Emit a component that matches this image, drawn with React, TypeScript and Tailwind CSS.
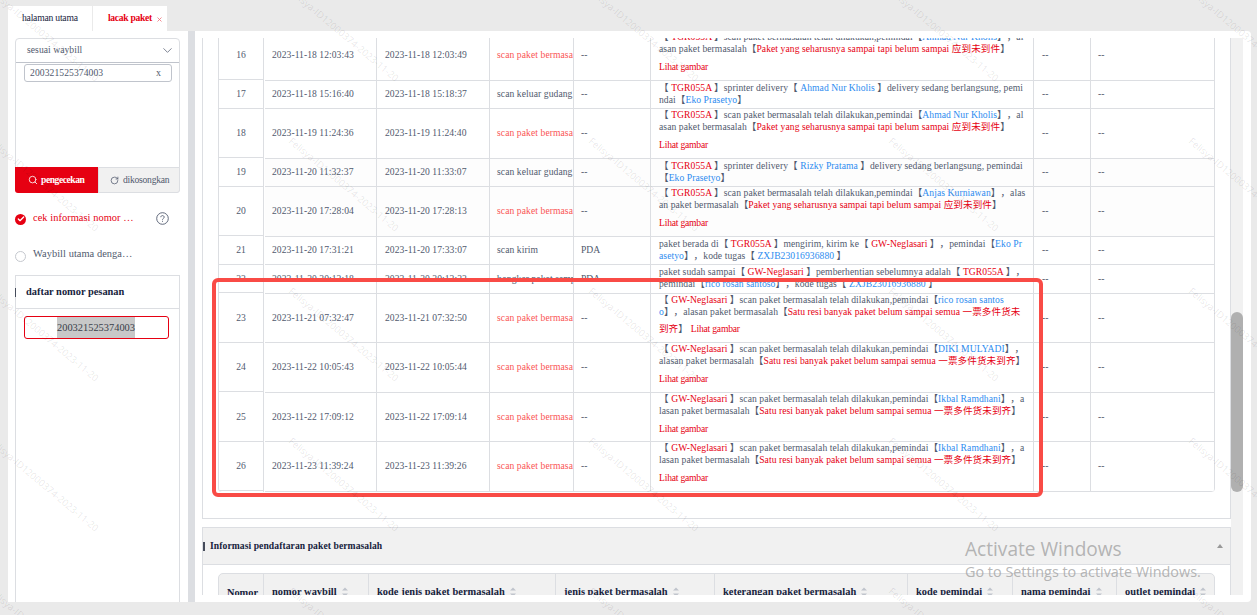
import type { ReactNode } from 'react'
import { ChevronDown, Search, RotateCw, Check } from 'lucide-react'

interface ScanRow {
    no: number
    scanned: string
    uploaded: string
    type: string
    problem?: boolean
    source: string
    // fixed column cells sit one pixel higher on some rows
    fixedHeight: string
    height: string
    shade?: boolean
    detail: ReactNode
}

const R = ({ children }: { children: ReactNode }) => <span className="text-[#e60012]">{children}</span>
const B = ({ children }: { children: ReactNode }) => <span className="text-[#2d8cf0]">{children}</span>
const Line = ({ children }: { children: ReactNode }) => <div className="h-3 leading-3 tracking-[0.07px] whitespace-pre">{children}</div>
const Photo = () => <div className="mt-1.5 h-3 leading-3 tracking-[-0.2px] text-[#e60012]">Lihat gambar</div>

const LATE = 'Paket yang seharusnya sampai tapi belum sampai 应到未到件'
const PARTIAL = 'Satu resi banyak paket belum sampai semua 一票多件货未到齐'
const PROBLEM = 'scan paket bermasalah'

const ROWS: ScanRow[] = [
    {
        no: 16, scanned: '2023-11-18 12:03:43', uploaded: '2023-11-18 12:03:49', type: PROBLEM, problem: true, source: '--',
        height: 'h-[50px]', fixedHeight: 'h-[49px]',
        detail: (
            <>
                <Line>【 <R>TGR055A</R> 】scan paket bermasalah telah dilakukan,pemindai【<B>Ahmad Nur Kholis</B>】，al</Line>
                <Line>asan paket bermasalah【<R>{LATE}</R>】</Line>
                <Photo />
            </>
        ),
    },
    {
        no: 17, scanned: '2023-11-18 15:16:40', uploaded: '2023-11-18 15:18:37', type: 'scan keluar gudang', source: '--',
        height: 'h-[28px]', fixedHeight: 'h-[29px]',
        detail: (
            <>
                <Line>【 <R>TGR055A</R> 】sprinter delivery【 <B>Ahmad Nur Kholis</B> 】delivery sedang berlangsung, pemi</Line>
                <Line>ndai【<B>Eko Prasetyo</B>】</Line>
            </>
        ),
    },
    {
        no: 18, scanned: '2023-11-19 11:24:36', uploaded: '2023-11-19 11:24:40', type: PROBLEM, problem: true, source: '--',
        height: 'h-[50px]', fixedHeight: 'h-[49px]',
        detail: (
            <>
                <Line>【 <R>TGR055A</R> 】scan paket bermasalah telah dilakukan,pemindai【<B>Ahmad Nur Kholis</B>】，al</Line>
                <Line>asan paket bermasalah【<R>{LATE}</R>】</Line>
                <Photo />
            </>
        ),
    },
    {
        no: 19, scanned: '2023-11-20 11:32:37', uploaded: '2023-11-20 11:33:07', type: 'scan keluar gudang', source: '--',
        height: 'h-[28px]', fixedHeight: 'h-[29px]', shade: true,
        detail: (
            <>
                <Line>【 <R>TGR055A</R> 】sprinter delivery【 <B>Rizky Pratama</B> 】delivery sedang berlangsung, pemindai</Line>
                <Line>【<B>Eko Prasetyo</B>】</Line>
            </>
        ),
    },
    {
        no: 20, scanned: '2023-11-20 17:28:04', uploaded: '2023-11-20 17:28:13', type: PROBLEM, problem: true, source: '--',
        height: 'h-[50px]', fixedHeight: 'h-[49px]', shade: true,
        detail: (
            <>
                <Line>【 <R>TGR055A</R> 】scan paket bermasalah telah dilakukan,pemindai【<B>Anjas Kurniawan</B>】，alas</Line>
                <Line>an paket bermasalah【<R>{LATE}</R>】</Line>
                <Photo />
            </>
        ),
    },
    {
        no: 21, scanned: '2023-11-20 17:31:21', uploaded: '2023-11-20 17:33:07', type: 'scan kirim', source: 'PDA',
        height: 'h-[28px]', fixedHeight: 'h-[29px]',
        detail: (
            <>
                <Line>paket berada di【 <R>TGR055A</R> 】mengirim, kirim ke【 <R>GW-Neglasari</R> 】，pemindai【<B>Eko Pr</B></Line>
                <Line><B>asetyo</B>】，kode tugas【 <B>ZXJB23016936880</B> 】</Line>
            </>
        ),
    },
    {
        no: 22, scanned: '2023-11-20 20:12:18', uploaded: '2023-11-20 20:12:22', type: 'bongkar paket sampai', source: 'PDA',
        height: 'h-[29px]', fixedHeight: 'h-[28px]',
        detail: (
            <>
                <Line>paket sudah sampai【 <R>GW-Neglasari</R> 】pemberhentian sebelumnya adalah【 <R>TGR055A</R> 】，</Line>
                <Line>pemindai【<B>rico rosan santoso</B>】，kode tugas【 <B>ZXJB23016936880</B> 】</Line>
            </>
        ),
    },
    {
        no: 23, scanned: '2023-11-21 07:32:47', uploaded: '2023-11-21 07:32:50', type: PROBLEM, problem: true, source: '--',
        height: 'h-[49px]', fixedHeight: 'h-[50px]',
        detail: (
            <>
                <Line>【 <R>GW-Neglasari</R> 】scan paket bermasalah telah dilakukan,pemindai【<B>rico rosan santos</B></Line>
                <Line><B>o</B>】，alasan paket bermasalah【<R>Satu resi banyak paket belum sampai semua 一票多件货未</R></Line>
                <div className="mt-[5px] h-3 leading-3 whitespace-pre"><R>到齐</R>】<span className="ml-[3px] tracking-[-0.2px] text-[#e60012]">Lihat gambar</span></div>
            </>
        ),
    },
    {
        no: 24, scanned: '2023-11-22 10:05:43', uploaded: '2023-11-22 10:05:44', type: PROBLEM, problem: true, source: '--',
        height: 'h-[50px]', fixedHeight: 'h-[49px]',
        detail: (
            <>
                <Line>【 <R>GW-Neglasari</R> 】scan paket bermasalah telah dilakukan,pemindai【<B>DIKI MULYADI</B>】，</Line>
                <Line>alasan paket bermasalah【<R>{PARTIAL}</R>】</Line>
                <Photo />
            </>
        ),
    },
    {
        no: 25, scanned: '2023-11-22 17:09:12', uploaded: '2023-11-22 17:09:14', type: PROBLEM, problem: true, source: '--',
        height: 'h-[49px]', fixedHeight: 'h-[50px]',
        detail: (
            <>
                <Line>【 <R>GW-Neglasari</R> 】scan paket bermasalah telah dilakukan,pemindai【<B>Ikbal Ramdhani</B>】，a</Line>
                <Line>lasan paket bermasalah【<R>{PARTIAL}</R>】</Line>
                <Photo />
            </>
        ),
    },
    {
        no: 26, scanned: '2023-11-23 11:39:24', uploaded: '2023-11-23 11:39:26', type: PROBLEM, problem: true, source: '--',
        height: 'h-[50px]', fixedHeight: 'h-[49px]',
        detail: (
            <>
                <Line>【 <R>GW-Neglasari</R> 】scan paket bermasalah telah dilakukan,pemindai【<B>Ikbal Ramdhani</B>】，a</Line>
                <Line>lasan paket bermasalah【<R>{PARTIAL}</R>】</Line>
                <Photo />
            </>
        ),
    },
]

const HEADERS = [
    { label: 'nomor waybill', width: 'w-[105px]' },
    { label: 'kode jenis paket bermasalah', width: 'w-[187px]' },
    { label: 'jenis paket bermasalah', width: 'w-[159px]' },
    { label: 'keterangan paket bermasalah', width: 'w-[193px]' },
    { label: 'kode pemindai', width: 'w-[105px]' },
    { label: 'nama pemindai', width: 'w-[104px]' },
    { label: 'outlet pemindai', width: 'w-[97px]' },
]

function SortIcon() {
    return (
        <svg width="6" height="10" viewBox="0 0 6 10" className="fill-[#c0c4cc]">
            <path d="M3 0.5 6 3.5H0zM0 6.5h6L3 9.5z" />
        </svg>
    )
}

function Tabs() {
    return (
        <div className="ml-2 flex h-[25px] w-[159px] bg-white text-[9.6px]">
            <div className="flex w-[85px] items-center border-r border-[#eaeaea] pl-[14px] tracking-[-0.2px] text-[#17233d]">
                halaman utama
            </div>
            <div className="flex flex-1 items-center pl-[15px] font-bold text-[#e60012]">
                <span className="w-[49px] tracking-[-0.3px]">lacak paket</span>
                <svg width="5" height="5" viewBox="0 0 5 5" className="mt-0.5 stroke-[#ee7078]" strokeWidth="0.8">
                    <path d="M.5.5l4 4M4.5.5l-4 4" />
                </svg>
            </div>
        </div>
    )
}

function Sidebar() {
    return (
        <aside className="flex w-[180px] flex-col bg-white pt-[7px] pl-[7px]">
            <div className="h-[155px] w-[165px] rounded border border-[#dcdee2]">
                <div className="flex h-6 items-center justify-between border-b border-[#c0c4cc] pr-[4px] pl-[11px] text-[9.6px] text-[#515a6e]">
                    <span className="tracking-[0.05px]">sesuai waybill</span>
                    <ChevronDown size={15} strokeWidth={1.6} className="text-[#808695]" />
                </div>
                <div className="mt-px ml-2 flex h-[18px] w-[148px] items-center justify-between rounded-[3px] border border-[#c0c4cc] pr-[10px] pl-[5px] text-[9.6px] text-[#515a6e]">
                    <span className="tracking-[0.08px]">200321525374003</span>
                    <span className="text-[10px] leading-none">x</span>
                </div>
                <div className="mt-[85px] -ml-px flex h-[26px] w-[165px] text-[9.6px]">
                    <button className="flex w-[83px] items-center rounded-bl-[3px] bg-[#e60012] pl-[13px] font-bold text-white">
                        <Search size={10} strokeWidth={2} />
                        <span className="ml-[3px] tracking-[-0.45px]">pengecekan</span>
                    </button>
                    <button className="flex flex-1 items-center rounded-br-[3px] border border-[#dcdee2] bg-[#f1f1f1] pl-[11px] text-[#515a6e]">
                        <RotateCw size={9} strokeWidth={2} />
                        <span className="ml-1 tracking-[-0.25px]">dikosongkan</span>
                    </button>
                </div>
            </div>

            <div className="mt-[17px] flex h-4 items-center text-[10.4px] text-[#e60012]">
                <span className="mt-0.5 flex size-[11px] items-center justify-center rounded-full bg-[#e60012] text-white">
                    <Check size={8} strokeWidth={4} />
                </span>
                <span className="ml-[7px] w-[101px] tracking-[0.05px] whitespace-nowrap">cek informasi nomor …</span>
                <svg width="13" height="13" viewBox="0 0 13 13" fill="none" className="ml-[22px] stroke-[#515a6e]">
                    <circle cx="6.5" cy="6.5" r="5.8" strokeWidth="0.9" />
                    <path d="M4.8 5.2c0-2.2 3.4-2.1 3.4 0 0 1.2-1.7 1.2-1.7 2.5M6.5 8.8v1" strokeWidth="0.9" />
                </svg>
            </div>
            <div className="mt-5 flex h-4 items-center text-[10.4px] text-[#515a6e]">
                <span className="mt-1 size-[11px] rounded-full border border-[#c5c8ce]" />
                <span className="ml-[7px] tracking-[0.05px]">Waybill utama denga…</span>
            </div>

            <div className="mt-[13px] w-[165px] flex-1 border border-b-0 border-[#dcdee2]">
                <div className="-ml-px flex h-[33px] items-center border-b border-[#dcdee2]">
                    <span className="h-[9px] w-px bg-[#464c5b]" />
                    <span className="ml-[10px] text-[10.4px] font-bold text-[#17233d]">daftar nomor pesanan</span>
                </div>
                <div className="mt-[7px] ml-2 flex h-[23px] w-[145px] justify-center rounded-[3px] border border-[#e60012] text-[10.4px] leading-[21px] text-[#3a3f4a]">
                    <span className="mr-px bg-[#c8c8c8]">200321525374003</span>
                </div>
            </div>
        </aside>
    )
}

function ScanTable() {
    return (
        <div className="ml-[15px] flex w-[997px] overflow-hidden rounded-b-[4px] border-x border-[#dcdee2] text-[9.6px] text-[#515a6e]">
            <div className="w-[45px] border-r border-[#dcdee2]">
                {ROWS.map(row => (
                    <div key={row.no} className={`flex items-center justify-center border-b border-[#dcdee2] pt-px ${row.fixedHeight}`}>
                        {row.no}
                    </div>
                ))}
            </div>
            <div className="ml-px flex-1">
                {ROWS.map(row => (
                    <div
                        key={row.no}
                        className={`grid grid-cols-[112px_113px_84px_77px_383px_57px_1fr] border-b border-[#dcdee2] ${row.height} ${row.shade ? 'bg-[#fdfdfd]' : 'bg-white'}`}
                    >
                        <div className="flex items-center border-r border-[#dcdee2] pl-[7px] tracking-[0.05px]">{row.scanned}</div>
                        <div className="flex items-center border-r border-[#dcdee2] pl-[8px] tracking-[0.05px]">{row.uploaded}</div>
                        <div className={`flex items-center overflow-hidden border-r border-[#dcdee2] pl-[7px] tracking-[0.08px] whitespace-nowrap ${row.problem ? 'text-[#fa5555]' : ''}`}>
                            {row.type}
                        </div>
                        <div className="flex items-center border-r border-[#dcdee2] pl-[7px]">{row.source}</div>
                        <div className={`overflow-hidden border-r border-[#dcdee2] pl-[8px] ${row.height === 'h-[28px]' || row.height === 'h-[29px]' ? 'pt-px' : ''}`}>
                            {row.detail}
                        </div>
                        <div className="flex items-center border-r border-[#dcdee2] pl-[8px]">--</div>
                        <div className="flex items-center pl-[7px]">--</div>
                    </div>
                ))}
            </div>
        </div>
    )
}

function ProblemPanel() {
    return (
        <section className="mt-2 h-[68px] w-[1029px] overflow-hidden border border-b-0 border-[#dcdee2] bg-white">
            <header className="flex h-[37px] items-center border-b border-[#dcdee2] bg-[#f1f1f1] pr-[7px]">
                <span className="h-[9px] w-0.5 bg-[#464c5b]" />
                <h3 className="ml-[5px] flex-1 text-[9.6px] font-bold tracking-[0.08px] text-[#17233d]">Informasi pendaftaran paket bermasalah</h3>
                <svg width="6" height="4" viewBox="0 0 6 4" className="fill-[#999]">
                    <path d="M3 0 6 4H0z" />
                </svg>
            </header>
            <div className="mt-2 ml-[15px] flex h-[38px] w-[997px] rounded-t-[5px] border border-[#dcdee2] bg-[#f1f1f1] text-[10.4px] font-bold text-[#17233d]">
                <div className="flex w-[45px] shrink-0 items-center justify-center border-r border-[#dcdee2] pt-0.5 pl-[3px]">Nomor</div>
                {HEADERS.map(h => (
                    <div key={h.label} className={`flex shrink-0 items-center gap-[5px] border-r border-[#dcdee2] pl-[8px] tracking-[0.04px] whitespace-nowrap last:border-r-0 ${h.width}`}>
                        {h.label}
                        <SortIcon />
                    </div>
                ))}
            </div>
        </section>
    )
}

const MARK_COLS = ['left-[-10px]', 'left-[290px]', 'left-[590px]', 'left-[890px]', 'left-[1190px]']
const MARK_ROWS = ['top-[-18px]', 'top-[132px]', 'top-[282px]', 'top-[432px]', 'top-[582px]']

function Watermark() {
    return (
        <div className="pointer-events-none absolute inset-0 overflow-hidden font-['Open_Sans',sans-serif] text-[9.6px] leading-4 text-black/10">
            {MARK_ROWS.map(top =>
                MARK_COLS.map(left => (
                    <span key={top + left} className={`absolute origin-left rotate-[40deg] whitespace-nowrap ${top} ${left}`}>
                        Felisya-ID12000374-2023-11-20
                    </span>
                )),
            )}
        </div>
    )
}

export default function App() {
    return (
        <div className="relative h-[615px] w-[1257px] overflow-hidden bg-[#eaeaea] pt-1.5 font-['Liberation_Serif','Noto_Sans_CJK_SC',serif] [text-spacing-trim:space-all]">
            <Tabs />
            <div className="ml-2 flex h-[571px] w-[1243px] overflow-hidden rounded-r-[4px] bg-white">
                <Sidebar />
                <div className="w-[7px] bg-[#dcdee2]" />
                <main className="flex h-[557px] flex-1 self-center pl-[7px]">
                    <div className="w-[1029px] overflow-hidden">
                        <section className="-mt-[7px] h-[488px] border-x border-b border-[#dcdee2]">
                            <ScanTable />
                        </section>
                        <ProblemPanel />
                    </div>
                    <div className="w-3 bg-[#f1f1f1] pt-[274px]">
                        <div className="h-[180px] w-3 rounded-full bg-[#b0b0b0]" />
                    </div>
                </main>
            </div>

            {/* Highlight around the latest scans */}
            <div className="absolute top-[278px] left-[212px] h-[219px] w-[831px] rounded-[6px] border-4 border-[#f94b46]" />

            <div className="absolute top-[536px] left-[965px] font-['Open_Sans',sans-serif] text-[#a3a3a3]/80">
                <div className="text-[19.1px] leading-[26px] whitespace-nowrap">Activate Windows</div>
                <div className="text-[14.4px] leading-[20px] whitespace-nowrap">Go to Settings to activate Windows.</div>
            </div>
            <Watermark />
        </div>
    )
}
